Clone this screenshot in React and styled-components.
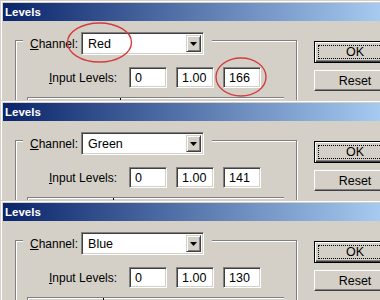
import React from "react";
import styled, { createGlobalStyle } from "styled-components";

const GlobalStyle = createGlobalStyle`
  html, body {
    margin: 0;
    padding: 0;
    width: 380px;
    height: 300px;
    overflow: hidden;
    background: #d4d0c8;
  }
  body {
    font-family: "Liberation Sans", Arial, sans-serif;
    font-size: 12px;
    color: #000;
  }
`;

const Panel = styled.div`
  position: relative;
  height: 100px;
  overflow: hidden;
  padding: 3px 0 0 3px;
  box-sizing: border-box;
  background: #d4d0c8;
  box-shadow: inset 1px 1px #d4d0c8, inset 2px 2px #fff;
`;

const TitleBar = styled.div`
  height: 18px;
  display: flex;
  align-items: center;
  padding-left: 2px;
  background: linear-gradient(to right, #0a246a, #a6caf0);
  color: #fff;
  font-weight: bold;
  font-size: 11.5px;
`;

const Body = styled.div`
  display: flex;
  align-items: flex-start;
  padding-left: 12px;
`;

const GroupBox = styled.div`
  flex-shrink: 0;
  width: 282px;
  height: 120px;
  box-sizing: border-box;
  margin-top: 19px;
  border: 1px solid #808080;
  box-shadow: inset 1px 1px #fff, 1px 1px #fff;
`;

const Legend = styled.div`
  display: flex;
  align-items: center;
  gap: 3px;
  width: fit-content;
  margin: -9px 0 0 7px;
  padding: 0 8px 0 7px;
  background: #d4d0c8;
`;

const Label = styled.span`
  white-space: nowrap;
  width: ${(p) => (p.$width ? `${p.$width}px` : "auto")};
`;

const Select = styled.div`
  position: relative;
  display: flex;
  align-items: center;
  width: 123px;
  height: 23px;
  box-sizing: border-box;
  padding-left: 6px;
  background: #fff;
  border: 1px solid;
  border-color: #808080 #fff #fff #808080;
  box-shadow: inset 1px 1px #404040, inset -1px -1px #d4d0c8;
  font-size: 12.5px;
`;

const ArrowButton = styled.div`
  position: absolute;
  top: 2px;
  right: 2px;
  width: 15px;
  height: 17px;
  box-sizing: border-box;
  display: flex;
  align-items: center;
  justify-content: center;
  background: #d4d0c8;
  border: 1px solid;
  border-color: #d4d0c8 #404040 #404040 #d4d0c8;
  box-shadow: inset 1px 1px #fff, inset -1px -1px #808080;
`;

const InputRow = styled.div`
  display: flex;
  align-items: center;
  gap: 9px;
  margin-top: 12px;
  padding-left: 33px;
`;

const Field = styled.div`
  width: 38px;
  height: 21px;
  box-sizing: border-box;
  display: flex;
  align-items: center;
  padding-left: 5px;
  background: #fff;
  border: 1px solid;
  border-color: #808080 #fff #fff #808080;
  box-shadow: inset 1px 1px #404040, inset -1px -1px #d4d0c8;
  font-size: 12.5px;
`;

const Histogram = styled.div`
  height: 60px;
  margin: 9px 12px 0 11px;
  border-top: 1px solid #808080;
  border-left: 1px solid #808080;
  box-shadow: inset 1px 1px #fff;
`;

const Buttons = styled.div`
  flex-shrink: 0;
  display: flex;
  flex-direction: column;
  gap: 7px;
  margin: 20px 0 0 17px;
`;

const Button = styled.div`
  position: relative;
  width: 82px;
  height: ${(p) => (p.$default ? 22 : 21)}px;
  box-sizing: border-box;
  display: flex;
  align-items: center;
  justify-content: center;
  font-size: 12.5px;
  background: #d4d0c8;
  border: 1px solid;
  border-color: ${(p) =>
    p.$default ? "#000" : "#fff #404040 #404040 #fff"};
  box-shadow: ${(p) =>
    p.$default
      ? "inset 1px 1px #fff, inset -1px -1px #404040, inset -2px -2px #808080"
      : "inset -1px -1px #808080"};

  &::after {
    content: "";
    display: ${(p) => (p.$default ? "block" : "none")};
    position: absolute;
    inset: 3px;
    border: 1px dotted #000;
  }
`;

const Annotations = styled.svg`
  position: absolute;
  left: 0;
  top: 0;
  pointer-events: none;
`;

const LevelsDialog = ({ channel, high, mark, annotated }) => (
  <Panel>
    <TitleBar>Levels</TitleBar>
    <Body>
      <GroupBox>
        <Legend>
          <Label>
            <u>C</u>hannel:
          </Label>
          <Select>
            {channel}
            <ArrowButton>
              <svg width="7" height="4" viewBox="0 0 7 4">
                <path d="M0 0h7L3.5 4z" fill="#000" />
              </svg>
            </ArrowButton>
          </Select>
        </Legend>
        <InputRow>
          <Label $width={71}>
            <u>I</u>nput Levels:
          </Label>
          <Field>0</Field>
          <Field>1.00</Field>
          <Field>{high}</Field>
        </InputRow>
        <Histogram>
          <svg width="256" height="20">
            <line x1={mark} y1="0" x2={mark} y2="20" stroke="#000" />
          </svg>
        </Histogram>
      </GroupBox>
      <Buttons>
        <Button $default>OK</Button>
        <Button>Reset</Button>
      </Buttons>
    </Body>
    {annotated && (
      <Annotations width="380" height="100">
        <ellipse cx="99.5" cy="42.5" rx="32" ry="19.5" fill="none" stroke="#d33c3c" strokeWidth="1.4" />
        <ellipse cx="241" cy="77" rx="25" ry="19" fill="none" stroke="#d33c3c" strokeWidth="1.4" />
      </Annotations>
    )}
  </Panel>
);

export default function App() {
  return (
    <>
      <GlobalStyle />
      <LevelsDialog channel="Red" high="166" mark={92.5} annotated />
      <LevelsDialog channel="Green" high="141" mark={85.5} />
      <LevelsDialog channel="Blue" high="130" mark={75.5} />
    </>
  );
}
